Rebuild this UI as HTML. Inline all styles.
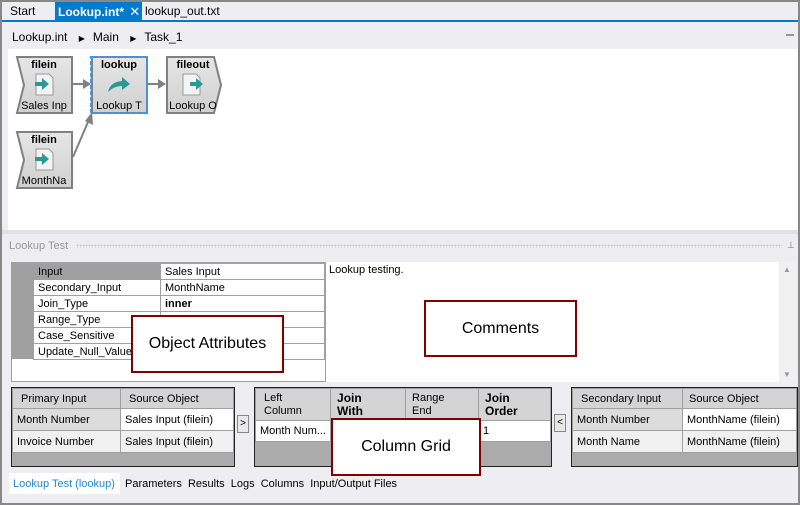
<!DOCTYPE html>
<html><head><meta charset="utf-8"><style>
*{margin:0;padding:0;box-sizing:border-box}
body{width:800px;height:505px;overflow:hidden;background:#eeeef2;font-family:"Liberation Sans",sans-serif;font-size:11px;color:#000;position:relative}
.a{position:absolute}
.frame{position:absolute;left:0;top:0;width:800px;height:505px;border:2px solid #888;pointer-events:none}
table{border-collapse:collapse}
.g td{border:1px solid #a0a0a0;font-size:11px;padding:0 4px;white-space:nowrap;overflow:hidden}
.box{position:absolute;border:2px solid #800000;background:#fff;font-size:16px;display:flex;align-items:center;justify-content:center}
</style></head><body>
<!-- tabs -->
<div class="a" style="left:10px;top:4px;font-size:12px">Start</div>
<div class="a" style="left:55px;top:2px;width:87px;height:19px;background:#007acc;color:#fff;font-weight:bold;font-size:12px;padding:2px 0 0 3px">Lookup.int* <span style="font-weight:normal;font-size:13px;margin-left:2px">✕</span></div>
<div class="a" style="left:145px;top:4px;font-size:12px">lookup_out.txt</div>
<div class="a" style="left:2px;top:20px;width:796px;height:2px;background:#007acc"></div>
<!-- breadcrumb -->
<div class="a" style="left:12px;top:30px;font-size:12px">Lookup.int <span style="font-size:8px;margin:0 8px">▶</span>Main <span style="font-size:8px;margin:0 8px">▶</span>Task_1</div>
<div class="a" style="left:786px;top:34px;width:8px;height:2px;background:#999"></div>
<!-- canvas -->
<div class="a" style="left:8px;top:49px;width:790px;height:181px;background:#fff"></div>
<svg class="a" style="left:0;top:0" width="240" height="200">
<defs><linearGradient id="ng" x1="0" y1="0" x2="0" y2="1"><stop offset="0" stop-color="#e6e6e6"/><stop offset="1" stop-color="#d0d0d0"/></linearGradient></defs>
<g fill="url(#ng)" stroke="#808080" stroke-width="2">
<path d="M17 57H72V113H17L24 85Z"/>
<path d="M17 132H72V188H17L24 160Z"/>
<rect x="92" y="57" width="55" height="56"/>
<path d="M167 57H214L221 85L214 113H167Z"/>
</g>
<rect x="91" y="57" width="56" height="56" fill="none" stroke="#3399ff" stroke-width="2" stroke-dasharray="4,2"/>
<g stroke="#808080" stroke-width="2" fill="#808080">
<line x1="72" y1="84" x2="84" y2="84"/><path d="M83 79L91 84L83 89Z" stroke="none"/>
<line x1="147" y1="84" x2="159" y2="84"/><path d="M158 79L166 84L158 89Z" stroke="none"/>
<line x1="73" y1="157" x2="88" y2="122"/><path d="M85 121L92 112L93 125Z" stroke="none"/>
</g>
<g font-family="Liberation Sans" font-size="11" text-anchor="middle">
<text x="44" y="68" font-weight="bold">filein</text><text x="44" y="109">Sales Inp</text>
<text x="44" y="143" font-weight="bold">filein</text><text x="44" y="184">MonthNa</text>
<text x="119" y="68" font-weight="bold">lookup</text><text x="119" y="109">Lookup T</text>
<text x="193" y="68" font-weight="bold">fileout</text><text x="193" y="109">Lookup O</text>
</g>
<g fill="#f4f4f4" stroke="#999" stroke-width="1">
<path d="M36 74H49L53 78V95H36Z"/><path d="M36 149H49L53 153V170H36Z"/><path d="M183 74H196L200 78V95H183Z"/>
</g>
<g fill="#2a9a94">
<path d="M35 82H42V78L49 84L42 90V86H35Z"/><path d="M35 157H42V153L49 159L42 165V161H35Z"/><path d="M190 82H196V78L203 84L196 90V86H190Z"/>
<path d="M108 92Q110 82 122 81V77L130 84L122 90V86Q114 86 108 92Z"/>
</g>
</svg>
<!-- panel header -->
<div class="a" style="left:2px;top:230px;width:796px;height:4px;background:#e0e0e6"></div>
<div class="a" style="left:9px;top:240px;color:#999;font-size:11px">Lookup Test</div>
<div class="a" style="left:76px;top:244px;width:706px;height:4px;background-image:radial-gradient(#c8c8c8 40%,transparent 45%);background-size:3px 3px"></div>
<div class="a" style="left:787px;top:240px;font-size:9px;color:#777">⊥</div>
<!-- attributes -->
<div class="a" style="left:11px;top:262px;width:315px;height:120px;background:#fff;border:1px solid #a0a0a0"></div>
<div class="a" style="left:12px;top:263px;width:21px;height:96px;background:#a0a0a0"></div>
<table class="a g" style="left:33px;top:263px;width:292px;background:#fff">
<tr style="height:16px"><td style="background:#a0a0a0;width:127px">Input</td><td>Sales Input</td></tr>
<tr style="height:16px"><td>Secondary_Input</td><td>MonthName</td></tr>
<tr style="height:16px"><td>Join_Type</td><td style="font-weight:bold">inner</td></tr>
<tr style="height:16px"><td>Range_Type</td><td></td></tr>
<tr style="height:16px"><td>Case_Sensitive</td><td></td></tr>
<tr style="height:16px"><td>Update_Null_Value</td><td></td></tr>
</table>
<!-- comments -->
<div class="a" style="left:326px;top:262px;width:470px;height:120px;background:#fff"></div>
<div class="a" style="left:329px;top:264px;font-size:11px">Lookup testing.</div>
<div class="a" style="left:779px;top:262px;width:17px;height:120px;background:#f0f0f0"></div>
<div class="a" style="left:783px;top:265px;font-size:8px;color:#999">▲</div>
<div class="a" style="left:783px;top:370px;font-size:8px;color:#999">▼</div>
<div class="box" style="left:131px;top:315px;width:153px;height:58px">Object Attributes</div>
<div class="box" style="left:424px;top:300px;width:153px;height:57px">Comments</div>
<!-- left grid -->
<div class="a" style="left:11px;top:387px;width:224px;height:80px;background:#ababab;border:1px solid #222"></div>
<table class="a g" style="left:12px;top:388px;width:222px">
<tr style="height:20px;background:#d4d4d4"><td style="width:108px;padding-left:8px">Primary Input</td><td style="padding-left:8px">Source Object</td></tr>
<tr style="height:22px"><td style="background:#dcdcdc">Month Number</td><td style="background:#fff">Sales Input (filein)</td></tr>
<tr style="height:22px"><td style="background:#f0f0f0">Invoice Number</td><td style="background:#f0f0f0">Sales Input (filein)</td></tr>
</table>
<div class="a" style="left:237px;top:415px;width:12px;height:18px;border:1px solid #888;background:#e8e8e8;font-size:10px;text-align:center;line-height:16px">&gt;</div>
<!-- middle grid -->
<div class="a" style="left:254px;top:387px;width:298px;height:80px;background:#ababab;border:1px solid #222"></div>
<table class="a g" style="left:255px;top:388px;width:296px">
<tr style="height:32px;background:#d4d4d4;line-height:13px"><td style="width:75px;padding-left:8px">Left<br>Column</td><td style="width:75px;font-weight:bold;font-size:12px;padding-left:6px">Join<br>With</td><td style="width:73px;padding-left:6px">Range<br>End</td><td style="font-weight:bold;font-size:12px;padding-left:6px">Join<br>Order</td></tr>
<tr style="height:21px;background:#fff"><td>Month Num...</td><td></td><td></td><td>1</td></tr>
</table>
<div class="a" style="left:554px;top:414px;width:12px;height:18px;border:1px solid #888;background:#e8e8e8;font-size:10px;text-align:center;line-height:16px">&lt;</div>
<!-- right grid -->
<div class="a" style="left:571px;top:387px;width:227px;height:80px;background:#ababab;border:1px solid #222"></div>
<table class="a g" style="left:572px;top:388px;width:225px">
<tr style="height:20px;background:#d4d4d4"><td style="width:110px;padding-left:8px">Secondary Input</td><td style="padding-left:6px">Source Object</td></tr>
<tr style="height:22px"><td style="background:#dcdcdc">Month Number</td><td style="background:#fff">MonthName (filein)</td></tr>
<tr style="height:22px"><td style="background:#f0f0f0">Month Name</td><td style="background:#f0f0f0">MonthName (filein)</td></tr>
</table>
<div class="box" style="left:331px;top:418px;width:150px;height:58px">Column Grid</div>
<!-- bottom tabs -->
<div class="a" style="left:9px;top:473px;width:111px;height:21px;background:#fff"></div>
<div class="a" style="left:13px;top:478px;font-size:11px;color:#1e88d8">Lookup Test (lookup)</div>
<div class="a" style="left:125px;top:478px;font-size:11px;word-spacing:0">Parameters&nbsp;&nbsp;Results&nbsp;&nbsp;Logs&nbsp;&nbsp;Columns&nbsp;&nbsp;Input/Output Files</div>
<div class="frame"></div>
</body></html>
